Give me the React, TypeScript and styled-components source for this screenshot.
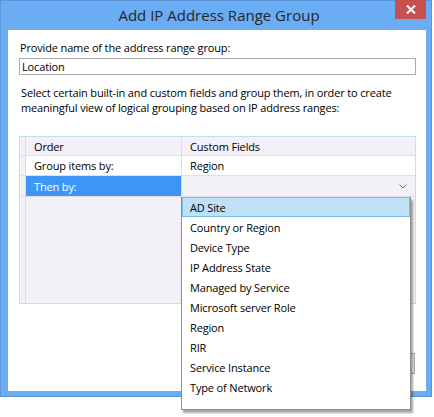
import React from 'react'
import styled, { createGlobalStyle } from 'styled-components'

const GlobalStyle = createGlobalStyle`
  body {
    margin: 0;
    background: #fff;
    font-family: 'Open Sans', 'Noto Sans', sans-serif;
  }
`

const fields = [
  'AD Site',
  'Country or Region',
  'Device Type',
  'IP Address State',
  'Managed by Service',
  'Microsoft server Role',
  'Region',
  'RIR',
  'Service Instance',
  'Type of Network',
]

const App = () => {
  return (
    <>
      <GlobalStyle />
      <Page>
        <Window>
          <TitleBar>
            <Title>Add IP Address Range Group</Title>
            <CloseButton>
              <svg width="10" height="9" viewBox="0 0 10 9">
                <path d="M1 0.5 L9 8.5 M9 0.5 L1 8.5" stroke="#fff" strokeWidth="2" />
              </svg>
            </CloseButton>
          </TitleBar>
          <Body>
            <Label>Provide name of the address range group:</Label>
            <NameInput defaultValue="Location" />
            <Description>
              Select certain built-in and custom fields and group them, in order to create meaningful view of
              logical grouping based on IP address ranges:
            </Description>
            <Grid>
              <GridRow $h={18}>
                <RowHeader />
                <Cell>Order</Cell>
                <Cell $last>Custom Fields</Cell>
              </GridRow>
              <GridRow $h={19} $bg="#fff">
                <RowHeader />
                <Cell>Group items by:</Cell>
                <Cell $last>Region</Cell>
              </GridRow>
              <GridRow $h={20}>
                <RowHeader />
                <Cell $selected>Then by:</Cell>
                <ComboCell>
                  <svg width="8" height="5" viewBox="0 0 8 5">
                    <path d="M0.5 0.5 L4 4 L7.5 0.5" stroke="#7a7a7a" fill="none" strokeWidth="1" />
                  </svg>
                  <Popup>
                    {fields.map((f, i) => (
                      <PopupItem key={f} $active={i === 0}>
                        {f}
                      </PopupItem>
                    ))}
                  </Popup>
                </ComboCell>
              </GridRow>
              <GridFill>
                <RowHeader />
              </GridFill>
            </Grid>
            <Footer>
              <Button>OK</Button>
              <Button>Cancel</Button>
            </Footer>
          </Body>
        </Window>
      </Page>
    </>
  )
}

const Page = styled.div`
  height: 417px;
`
const Window = styled.div`
  width: 432px;
  height: 397px;
  box-sizing: border-box;
  background: #6badf5;
  border: 1px solid #5a96d6;
  display: flex;
  flex-direction: column;
  padding: 0 5px 5px 7px;
`
const TitleBar = styled.div`
  height: 29px;
  position: relative;
  display: flex;
  align-items: center;
  justify-content: center;
`
const Title = styled.div`
  font-size: 15px;
  color: #262626;
  margin-top: -1px;
  margin-left: 4px;
`
const CloseButton = styled.div`
  position: absolute;
  top: -1px;
  right: 0;
  width: 31px;
  height: 19px;
  background: #c75050;
  display: flex;
  align-items: center;
  justify-content: center;
`
const Body = styled.div`
  flex: 1;
  background: #fff;
  padding: 10px 10px 0 12px;
  display: flex;
  flex-direction: column;
  font-size: 11px;
  letter-spacing: -0.15px;
  color: #000;
`
const Label = styled.div`
  line-height: 16px;
`
const NameInput = styled.input`
  margin-top: 2px;
  height: 17px;
  box-sizing: border-box;
  width: 397px;
  margin-left: -1px;
  border: 1px solid #acacac;
  padding: 0 2px;
  font: inherit;
  letter-spacing: -0.15px;
  outline: none;
`
const Description = styled.div`
  margin-top: 10px;
  padding-left: 1px;
  line-height: 15px;
  width: 392px;
`
const Grid = styled.div`
  margin-top: 21px;
  margin-left: -1px;
  width: 397px;
  height: 168px;
  box-sizing: border-box;
  border: 1px solid #c3dff0;
  background: #f4f0f7;
  display: flex;
  flex-direction: column;
`
const GridRow = styled.div<{ $bg?: string; $h: number }>`
  display: grid;
  grid-template-columns: 6px 156px 1fr;
  height: ${(p) => p.$h}px;
  background: ${(p) => p.$bg || 'transparent'};
  border-bottom: 1px solid #e2dfe6;
`
const RowHeader = styled.div`
  border-right: 1px solid #dcdce0;
  background: #f4f0f7;
`
const Cell = styled.div<{ $last?: boolean; $selected?: boolean }>`
  padding-left: 8px;
  display: flex;
  align-items: center;
  border-right: ${(p) => (p.$last ? 'none' : '1px solid #dcdce0')};
  background: ${(p) => (p.$selected ? '#3d96f6' : 'transparent')};
  color: ${(p) => (p.$selected ? '#fff' : '#000')};
`
const ComboCell = styled.div`
  position: relative;
  display: flex;
  align-items: center;
  justify-content: flex-end;
  padding-right: 8px;
`
const Popup = styled.div`
  position: absolute;
  top: 21px;
  left: -1px;
  width: 230px;
  box-sizing: border-box;
  background: #fff;
  border: 1px solid #8e8e8e;
  border-top: none;
  padding-bottom: 12px;
  box-shadow: 2px 3px 2px rgba(0, 0, 0, 0.35);
  z-index: 2;
`
const PopupItem = styled.div<{ $active?: boolean }>`
  height: 20px;
  box-sizing: border-box;
  display: flex;
  align-items: center;
  padding-left: 7px;
  background: ${(p) => (p.$active ? '#bfe0f6' : 'transparent')};
  border: 1px solid ${(p) => (p.$active ? '#76c0ec' : 'transparent')};
`
const GridFill = styled.div`
  flex: 1;
  display: grid;
  grid-template-columns: 6px 1fr;
`
const Footer = styled.div`
  display: flex;
  justify-content: flex-end;
  gap: 8px;
  margin-top: 49px;
  padding-right: 1px;
`
const Button = styled.div`
  width: 70px;
  height: 21px;
  box-sizing: border-box;
  border: 1px solid #acacac;
  background: #e9e9e9;
  display: flex;
  align-items: center;
  justify-content: center;
`

export default App
